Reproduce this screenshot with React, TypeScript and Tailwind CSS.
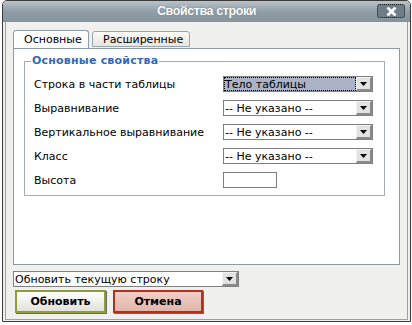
import React from "react";

function Arrow() {
  return (
    <svg width="7" height="4" viewBox="0 0 7 4" className="block">
      <path d="M0 0h7L3.5 4z" fill="#000" />
    </svg>
  );
}

function Select({
  value,
  width,
  focused,
}: {
  value: string;
  width: string;
  focused?: boolean;
}) {
  return (
    <div className={`${width} h-[16px] flex border border-[#7f7f7f] bg-white`}>
      <div
        className={
          focused
            ? "flex-1 flex items-center px-[1px] bg-[#aab4c6] outline outline-1 outline-dotted outline-black -outline-offset-1 leading-none"
            : "flex-1 flex items-center px-[1px] leading-none"
        }
      >
        {value}
      </div>
      <div className="w-[16px] h-full flex items-center justify-center bg-[#e2e2e2] border-l border-t border-[#f4f4f4] border-r-2 border-b-2 border-r-[#8a8a8a] border-b-[#8a8a8a]">
        <Arrow />
      </div>
    </div>
  );
}

export default function App() {
  const rows: { label: string; kind: "select" | "input"; value?: string; focused?: boolean }[] = [
    { label: "Строка в части таблицы", kind: "select", value: "Тело таблицы", focused: true },
    { label: "Выравнивание", kind: "select", value: "-- Не указано --" },
    { label: "Вертикальное выравнивание", kind: "select", value: "-- Не указано --" },
    { label: "Класс", kind: "select", value: "-- Не указано --" },
    { label: "Высота", kind: "input" },
  ];

  return (
    <div className="w-[412px] h-[325px] bg-white font-['DejaVu_Sans',sans-serif] text-[11px] text-black">
      <div className="ml-[2px] w-[409px] h-[322px] border border-[#3a3a3a] rounded-t-[5px] bg-[#f0f0ee] flex flex-col overflow-hidden">
        {/* Title bar */}
        <div className="relative h-[21px] shrink-0 flex items-center justify-center bg-gradient-to-b from-[#b9c3c9] via-[#909ea8] to-[#85939d]">
          <span className="font-['Liberation_Sans',sans-serif] font-bold text-[12.5px] tracking-[-0.4px] text-white leading-none [text-shadow:0_0_1px_#55606a]">
            Свойства строки
          </span>
          <div className="absolute right-[5px] top-[3px] w-[28px] h-[14px] rounded-[3px] bg-[#6f7d89] border border-dotted border-[#1a1a1a] flex items-center justify-center">
            <svg width="11" height="9" viewBox="0 0 11 9">
              <path d="M1.5 0.5L9.5 8.5M9.5 0.5L1.5 8.5" stroke="#fff" strokeWidth="2.8" />
            </svg>
          </div>
        </div>

        {/* Body */}
        <div className="flex-1 mx-[2px] mb-[1px] border-x border-b border-[#97a3ab] pt-[9px] px-[7px] flex flex-col">
          {/* Tabs */}
          <div className="flex items-end gap-[3px] h-[17px] relative z-10">
            <div className="w-[76px] h-[18px] bg-white border border-b-0 border-[#8c9aa5] rounded-t-[3px] pl-[10px] flex items-center leading-none">
              Основные
            </div>
            <div className="w-[98px] h-[16px] mb-[1px] bg-gradient-to-b from-[#fbfbfa] to-[#e6e5e0] border border-[#9aa6ae] rounded-t-[3px] pl-[10px] flex items-center leading-none">
              Расширенные
            </div>
          </div>

          {/* Panel */}
          <div className="h-[217px] bg-white border border-[#8c9aa5] px-[10px]">
            <fieldset className="mt-[5px] w-[361px] border border-[#a4adb4] px-[6px] pt-[8px] pb-[7px]">
              <legend className="px-[1px] font-bold text-[#2f6bb3] leading-[14px] tracking-[0.2px]">Основные свойства</legend>
              <div className="pl-[3px] grid grid-cols-[189px_150px] gap-y-[8px] items-center">
                {rows.map((r) => (
                  <React.Fragment key={r.label}>
                    <div className="leading-none">{r.label}</div>
                    {r.kind === "select" ? (
                      <Select value={r.value!} width="w-[150px]" focused={r.focused} />
                    ) : (
                      <div className="w-[54px] h-[16px] border border-[#7f7f7f] bg-white" />
                    )}
                  </React.Fragment>
                ))}
              </div>
            </fieldset>
          </div>

          {/* Bottom select */}
          <div className="mt-[6px]">
            <Select value="Обновить текущую строку" width="w-[226px]" />
          </div>

          {/* Buttons */}
          <div className="mt-[3px] ml-[2px] flex gap-[7px]">
            <div className="w-[91px] h-[23px] border-2 border-[#8e9c3e] bg-gradient-to-b from-[#ffffff] to-[#e2e2da] shadow-[1px_1px_0_#6a6a6a] flex items-center justify-center font-bold leading-none">
              Обновить
            </div>
            <div className="w-[90px] h-[23px] border-2 border-[#b3311c] bg-gradient-to-b from-[#f0cfc7] to-[#e2b5aa] shadow-[1px_1px_0_#6a6a6a] flex items-center justify-center font-bold leading-none">
              Отмена
            </div>
          </div>
        </div>
      </div>
    </div>
  );
}
